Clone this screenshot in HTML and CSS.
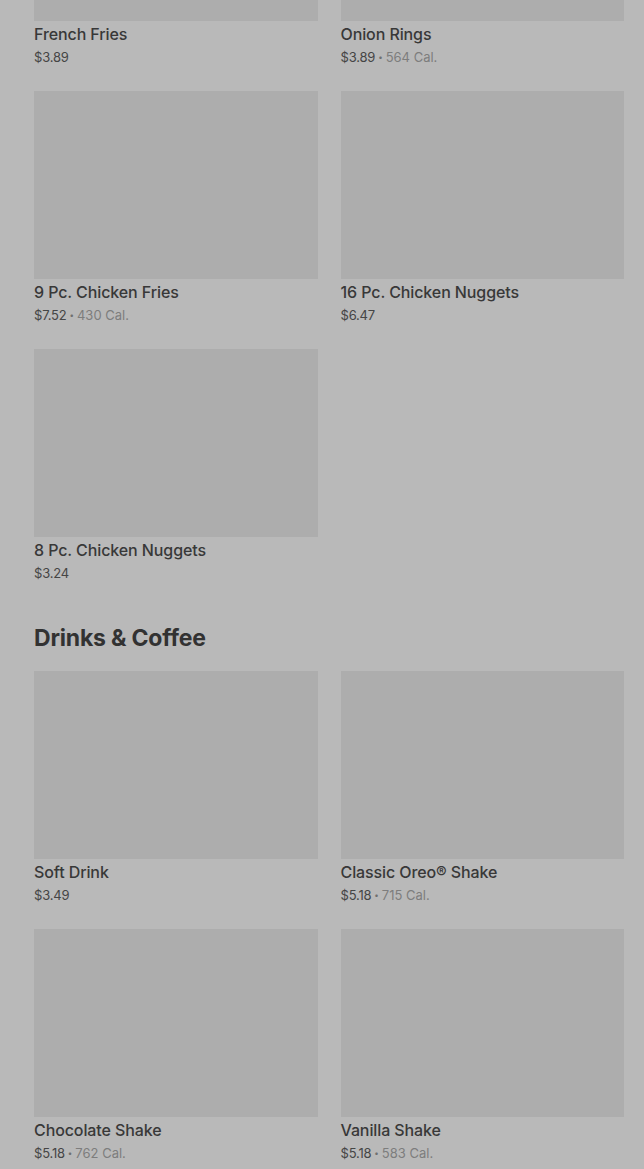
FILE: index.html
```html
<!DOCTYPE html>
<html lang="en">
<head>
<meta charset="utf-8">
<title>Menu</title>
<link rel="stylesheet" href="styles.css">
</head>
<body>
<main class="menu">
  <section class="section first">
    <div class="grid">
      <div class="item"><div class="thumb"></div><div class="name">French Fries</div><div class="meta"><span class="price">$3.89</span></div></div>
      <div class="item"><div class="thumb"></div><div class="name">Onion Rings</div><div class="meta"><span class="price">$3.89</span><span class="dot">•</span><span class="cal">564 Cal.</span></div></div>
      <div class="item"><div class="thumb"></div><div class="name">9 Pc. Chicken Fries</div><div class="meta"><span class="price">$7.52</span><span class="dot">•</span><span class="cal">430 Cal.</span></div></div>
      <div class="item"><div class="thumb"></div><div class="name">16 Pc. Chicken Nuggets</div><div class="meta"><span class="price">$6.47</span></div></div>
      <div class="item"><div class="thumb"></div><div class="name">8 Pc. Chicken Nuggets</div><div class="meta"><span class="price">$3.24</span></div></div>
    </div>
  </section>
  <section class="section">
    <h2 class="heading">Drinks &amp; Coffee</h2>
    <div class="grid">
      <div class="item"><div class="thumb"></div><div class="name">Soft Drink</div><div class="meta"><span class="price">$3.49</span></div></div>
      <div class="item"><div class="thumb"></div><div class="name">Classic Oreo® Shake</div><div class="meta"><span class="price">$5.18</span><span class="dot">•</span><span class="cal">715 Cal.</span></div></div>
      <div class="item"><div class="thumb"></div><div class="name">Chocolate Shake</div><div class="meta"><span class="price">$5.18</span><span class="dot">•</span><span class="cal">762 Cal.</span></div></div>
      <div class="item"><div class="thumb"></div><div class="name">Vanilla Shake</div><div class="meta"><span class="price">$5.18</span><span class="dot">•</span><span class="cal">583 Cal.</span></div></div>
    </div>
  </section>
</main>
</body>
</html>
```
FILE: styles.css
```css
html, body {
  margin: 0;
  padding: 0;
  background: #b9b9b9;
  overflow: hidden;
}
body {
  font-family: Inter, "Noto Sans", Arial, sans-serif;
  color: #373737;
}
.menu {
  padding: 0 20px 0 34px;
}
.section.first {
  margin-top: -167px;
}
.grid {
  display: grid;
  grid-template-columns: 1fr 1fr;
  column-gap: 23px;
  row-gap: 24px;
}
.item {
  display: flex;
  flex-direction: column;
}
.thumb {
  height: 188px;
  background: #adadad;
}
.name {
  margin-top: 3px;
  font-size: 16px;
  line-height: 20px;
  font-weight: 500;
  color: #383838;
  letter-spacing: -0.1px;
}
.meta {
  margin-top: 3px;
  font-size: 13px;
  line-height: 20px;
  display: flex;
  align-items: center;
}
.price {
  color: #454545;
  letter-spacing: -0.2px;
}
.dot {
  color: #6f6f6f;
  font-size: 8px;
  margin: 0 3px;
}
.cal {
  color: #7d7d7d;
}
.heading {
  margin: 39px 0 17px;
  font-size: 23px;
  line-height: 32px;
  font-weight: 700;
  letter-spacing: -0.2px;
  color: #323232;
}
```
